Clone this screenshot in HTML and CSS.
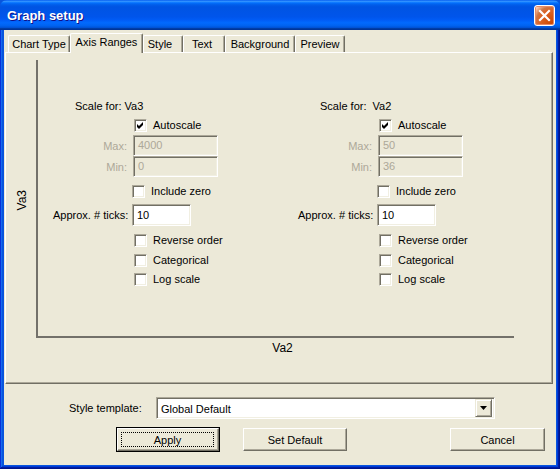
FILE: index.html
```html
<!DOCTYPE html>
<html>
<head>
<meta charset="utf-8">
<link rel="stylesheet" href="styles.css">
</head>
<body>
<div class="window">
  <div class="titlebar">
    <span class="title">Graph setup</span>
    <span class="close">
      <svg width="13" height="13" viewBox="0 0 13 13"><path d="M2 2 L11 11 M11 2 L2 11" stroke="#fff" stroke-width="2.2" stroke-linecap="square"/></svg>
    </span>
  </div>
  <div class="frame">
    <div class="client">
      <div class="tabs">
        <div class="tab w-chart">Chart Type</div>
        <div class="tab tab-active w-axis">Axis Ranges</div>
        <div class="tab w-style">Style</div>
        <div class="tab w-text">Text</div>
        <div class="tab w-bg">Background</div>
        <div class="tab w-preview">Preview</div>
      </div>
      <div class="panel">
        <div class="plot-row">
          <div class="ylabel"><span>Va3</span></div>
          <div class="plot">
            <div class="axis-form">
              <div class="scale-row">Scale for: Va3</div>
              <div class="check-row mt-auto"><span class="cb"><svg width="11" height="11" viewBox="0 0 11 11"><path d="M2 4 L4 6 L8 2 L8 5 L4 9 L2 7 Z" fill="#000"/></svg></span><span>Autoscale</span></div>
              <div class="field-row mt-max"><span class="flabel dis">Max:</span><span class="field field-dis w-range">4000</span></div>
              <div class="field-row mt-min"><span class="flabel dis">Min:</span><span class="field field-dis w-range">0</span></div>
              <div class="check-row cb-left mt-zero"><span class="cb"></span><span>Include zero</span></div>
              <div class="field-row mt-ticks"><span class="flabel">Approx. # ticks:</span><span class="field field-ticks">10</span></div>
              <div class="check-row mt-rev"><span class="cb"></span><span>Reverse order</span></div>
              <div class="check-row mt-cat"><span class="cb"></span><span>Categorical</span></div>
              <div class="check-row mt-log"><span class="cb"></span><span>Log scale</span></div>
            </div>
            <div class="axis-form">
              <div class="scale-row">Scale for:&nbsp; Va2</div>
              <div class="check-row mt-auto"><span class="cb"><svg width="11" height="11" viewBox="0 0 11 11"><path d="M2 4 L4 6 L8 2 L8 5 L4 9 L2 7 Z" fill="#000"/></svg></span><span>Autoscale</span></div>
              <div class="field-row mt-max"><span class="flabel dis">Max:</span><span class="field field-dis w-range">50</span></div>
              <div class="field-row mt-min"><span class="flabel dis">Min:</span><span class="field field-dis w-range">36</span></div>
              <div class="check-row cb-left mt-zero"><span class="cb"></span><span>Include zero</span></div>
              <div class="field-row mt-ticks"><span class="flabel">Approx. # ticks:</span><span class="field field-ticks">10</span></div>
              <div class="check-row mt-rev"><span class="cb"></span><span>Reverse order</span></div>
              <div class="check-row mt-cat"><span class="cb"></span><span>Categorical</span></div>
              <div class="check-row mt-log"><span class="cb"></span><span>Log scale</span></div>
            </div>
          </div>
        </div>
        <div class="xlabel">Va2</div>
      </div>
      <div class="template-row">
        <span class="tlabel">Style template:</span>
        <div class="combo">
          <span class="combo-text">Global Default</span>
          <span class="combo-btn"><svg width="7" height="4" viewBox="0 0 7 4"><path d="M0 0 H7 L3.5 4 Z" fill="#000"/></svg></span>
        </div>
      </div>
      <div class="button-row">
        <div class="btn-default"><div class="btn btn-apply"><span class="focus">Apply</span></div></div>
        <div class="btn btn-setdef">Set Default</div>
        <div class="btn btn-cancel">Cancel</div>
      </div>
    </div>
  </div>
</div>
</body>
</html>
```

FILE: styles.css
```css
* { box-sizing: border-box; }
html, body { margin: 0; padding: 0; }
body {
  width: 560px;
  height: 469px;
  overflow: hidden;
  font-family: "Liberation Sans", Arial, sans-serif;
  font-size: 11px;
  color: #000;
  background: #ece9d8;
}
.window {
  width: 560px;
  height: 469px;
  display: flex;
  flex-direction: column;
  background: #0855dd;
}
.titlebar {
  height: 30px;
  flex: none;
  display: flex;
  align-items: center;
  justify-content: space-between;
  padding: 1px 5px 0 7px;
  border-radius: 7px 7px 0 0;
  background: linear-gradient(to bottom, #0058ee 0%, #3593ff 4%, #288eff 6%, #127dff 8%, #036ffc 10%, #0262ee 14%, #0057e5 20%, #0054e3 24%, #0055eb 56%, #005bf5 66%, #026afe 76%, #0062ef 86%, #0052d6 92%, #0040ab 94%, #003092 100%);
}
.title {
  color: #fff;
  font-weight: bold;
  font-size: 13px;
  text-shadow: 1px 1px #0f1089;
}
.close {
  width: 21px;
  height: 21px;
  border: 1px solid #fff;
  border-radius: 3px;
  display: flex;
  align-items: center;
  justify-content: center;
  background: radial-gradient(circle at 90% 90%, #cc4600 0%, #dc6527 55%, #cd7546 68%, #ffccb2 90%, #ffffff 100%);
  box-shadow: inset 0 0 0 1px #e88a66;
}
.frame {
  flex: 1;
  display: flex;
  padding: 0 4px 4px 4px;
  background: #0855dd;
  box-shadow: inset -1px -1px #00138c, inset 1px 0 #0831d9, inset -2px -2px #001ea0, inset 2px 0 #166aee, inset -3px -3px #003bda, inset 3px 0 #0855dd;
}
.client {
  flex: 1;
  display: flex;
  flex-direction: column;
  background: #ece9d8;
}
.tabs {
  height: 22px;
  flex: none;
  display: flex;
  align-items: flex-end;
  padding-left: 4px;
}
.tab {
  height: 17px;
  display: flex;
  align-items: center;
  justify-content: center;
  padding-bottom: 1px;
  border-top: 1px solid #fff;
  border-left: 1px solid #fff;
  border-right: 1px solid #716f64;
  box-shadow: inset -1px 0 #aca899;
  border-radius: 2px 2px 0 0;
  background: #ece9d8;
  white-space: nowrap;
}
.tab-active {
  height: 20px;
  margin-bottom: -1px;
  padding-bottom: 4px;
  position: relative;
  z-index: 1;
}
.w-chart { width: 62px; }
.w-axis { width: 73px; }
.w-style { width: 40px; padding-right: 6px; }
.w-text { width: 42px; padding-right: 4px; }
.w-bg { width: 70px; }
.w-preview { width: 50px; }

.panel {
  height: 332px;
  flex: none;
  margin: 0 3px 0 1px;
  padding-top: 7px;
  border-top: 1px solid #fff;
  border-left: 1px solid #fff;
  border-right: 1px solid #716f64;
  border-bottom: 1px solid #716f64;
  box-shadow: inset -1px -1px #aca899;
}
.plot-row {
  display: flex;
  height: 278px;
}
.ylabel {
  width: 30px;
  flex: none;
  display: flex;
  align-items: center;
  justify-content: center;
  padding-left: 1px;
  padding-top: 2px;
}
.ylabel span {
  writing-mode: vertical-rl;
  transform: rotate(180deg);
  font-size: 12px;
}
.plot {
  width: 478px;
  height: 278px;
  flex: none;
  border-left: 2px solid #73716a;
  border-bottom: 2px solid #73716a;
  display: flex;
  padding: 40px 0 0 15px;
}
.axis-form {
  width: 245px;
  flex: none;
  display: flex;
  flex-direction: column;
}
.scale-row {
  height: 12px;
  line-height: 12px;
  padding-left: 22px;
  white-space: pre;
}
.check-row {
  display: flex;
  align-items: center;
  height: 13px;
  padding-left: 81px;
  gap: 6px;
  line-height: 13px;
}
.cb-left { padding-left: 79px; }
.cb {
  width: 13px;
  height: 13px;
  flex: none;
  background: #fff;
  border-top: 1px solid #aca899;
  border-left: 1px solid #aca899;
  border-bottom: 1px solid #fff;
  border-right: 1px solid #fff;
  box-shadow: inset 1px 1px #716f64, inset -1px -1px #f1efe2;
  display: flex;
  align-items: flex-start;
  justify-content: flex-start;
}
.cb svg { display: block; }
.field-row {
  display: flex;
  align-items: center;
}
.flabel {
  width: 74px;
  flex: none;
  text-align: right;
  white-space: nowrap;
}
.dis { color: #aca899; }
.field {
  margin-left: 6px;
  flex: none;
  padding: 3px 0 0 4px;
  border-top: 1px solid #aca899;
  border-left: 1px solid #aca899;
  border-bottom: 1px solid #fff;
  border-right: 1px solid #fff;
  box-shadow: inset 1px 1px #716f64, inset -1px -1px #f1efe2;
  line-height: 13px;
}
.field-dis {
  background: #ece9d8;
  color: #aca899;
  height: 21px;
}
.w-range { width: 85px; }
.field-ticks {
  margin-left: 5px;
  width: 59px;
  height: 22px;
  background: #fff;
  padding-top: 4px;
}
.mt-auto { margin-top: 7px; }
.mt-max { margin-top: 3px; }
.mt-min { margin-top: 0; }
.mt-zero { margin-top: 8px; }
.mt-ticks { margin-top: 6px; }
.mt-rev { margin-top: 8px; }
.mt-cat { margin-top: 7px; }
.mt-log { margin-top: 6px; }

.xlabel {
  padding-left: 32px;
  width: 521px;
  margin-top: 3px;
  text-align: center;
  font-size: 12px;
  line-height: 14px;
}

.template-row {
  margin-top: 13px;
  display: flex;
  align-items: center;
  padding-left: 65px;
}
.tlabel {
  width: 87px;
  flex: none;
}
.combo {
  width: 339px;
  height: 22px;
  flex: none;
  background: #fff;
  display: flex;
  align-items: center;
  justify-content: space-between;
  padding: 2px 2px 2px 4px;
  border-top: 1px solid #aca899;
  border-left: 1px solid #aca899;
  border-bottom: 1px solid #fff;
  border-right: 1px solid #fff;
  box-shadow: inset 1px 1px #716f64, inset -1px -1px #f1efe2;
}
.combo-text { padding-top: 1px; }
.combo-btn {
  width: 17px;
  height: 18px;
  background: #ece9d8;
  border-top: 1px solid #ece9d8;
  border-left: 1px solid #ece9d8;
  border-right: 1px solid #716f64;
  border-bottom: 1px solid #716f64;
  box-shadow: inset 1px 1px #fff, inset -1px -1px #aca899;
  display: flex;
  align-items: center;
  justify-content: center;
}
.combo-btn svg { display: block; }

.button-row {
  margin-top: 8px;
  display: flex;
  align-items: center;
  padding-left: 112px;
}
.btn {
  height: 23px;
  width: 104px;
  flex: none;
  display: flex;
  align-items: center;
  justify-content: center;
  background: #ece9d8;
  border-top: 1px solid #fff;
  border-left: 1px solid #fff;
  border-right: 1px solid #716f64;
  border-bottom: 1px solid #716f64;
  box-shadow: inset -1px -1px #aca899;
}
.btn-default {
  border: 1px solid #000;
  width: 104px;
  height: 25px;
  flex: none;
}
.btn-apply {
  width: 102px;
  padding: 3px 4px 3px 3px;
}
.focus {
  flex: 1;
  align-self: stretch;
  display: flex;
  align-items: center;
  justify-content: center;
  border: 1px dotted #000;
}
.btn-setdef { margin-left: 23px; }
.btn-cancel { margin-left: 103px; width: 95px; }
```
